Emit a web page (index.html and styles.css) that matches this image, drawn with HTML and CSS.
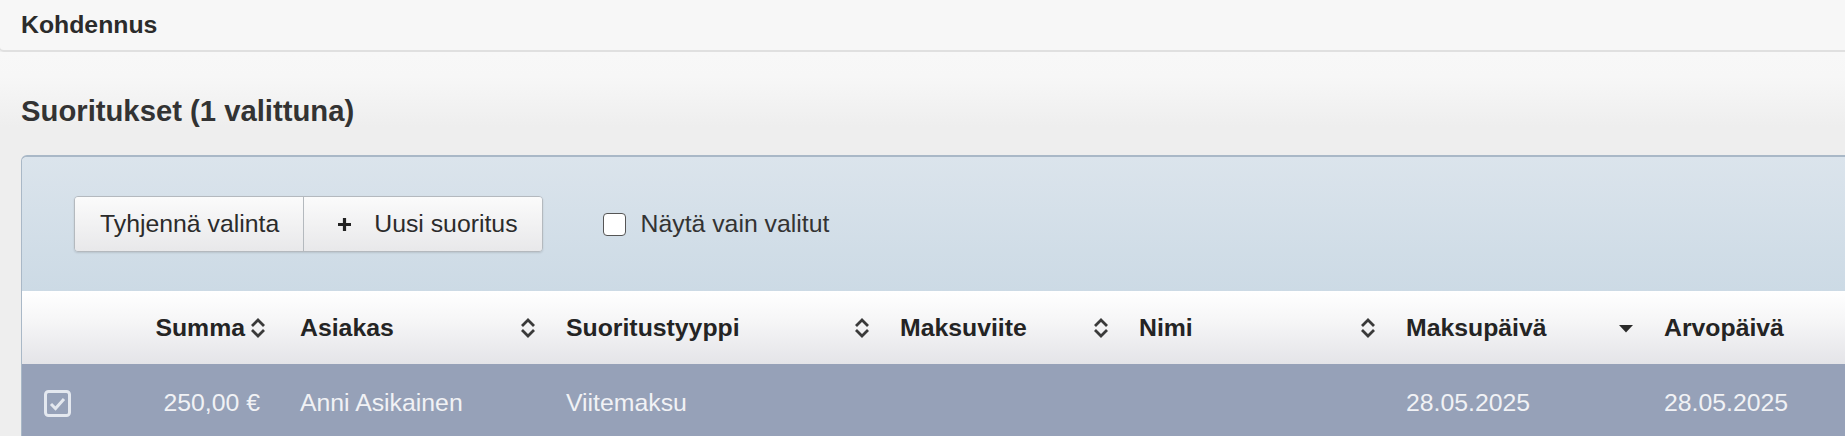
FILE: index.html
```html
<!DOCTYPE html>
<html lang="fi">
<head>
    <meta charset="UTF-8">
    <meta name="viewport" content="width=device-width, initial-scale=1.0">
    <title>Kohdennus</title>
    <link rel="stylesheet" href="styles.css">
</head>
<body>
    <div class="top-bar">Kohdennus</div>

    <div class="main">
        <h2 class="section-title">Suoritukset (1 valittuna)</h2>

        <div class="panel">
            <div class="toolbar">
                <div class="btn-group">
                    <button class="btn">Tyhjennä valinta</button>
                    <button class="btn btn-add">
                        <svg class="plus" width="15" height="15" viewBox="0 0 15 15">
                            <path d="M7.5 1v13M1 7.5h13" stroke="#222" stroke-width="3.2"/>
                        </svg>
                        Uusi suoritus
                    </button>
                </div>
                <label class="check-label">
                    <span class="check-box"></span>
                    Näytä vain valitut
                </label>
            </div>

            <div class="grid header">
                <div class="cell"></div>
                <div class="cell cell-right">Summa <svg class="sort" width="16" height="24" viewBox="0 0 16 24"><path d="M2 10l6-6 6 6M2 14l6 6 6-6" fill="none" stroke="#3a3a3a" stroke-width="2.8"/></svg></div>
                <div class="cell">Asiakas <svg class="sort" width="16" height="24" viewBox="0 0 16 24"><path d="M2 10l6-6 6 6M2 14l6 6 6-6" fill="none" stroke="#3a3a3a" stroke-width="2.8"/></svg></div>
                <div class="cell">Suoritustyyppi <svg class="sort" width="16" height="24" viewBox="0 0 16 24"><path d="M2 10l6-6 6 6M2 14l6 6 6-6" fill="none" stroke="#3a3a3a" stroke-width="2.8"/></svg></div>
                <div class="cell">Maksuviite <svg class="sort" width="16" height="24" viewBox="0 0 16 24"><path d="M2 10l6-6 6 6M2 14l6 6 6-6" fill="none" stroke="#3a3a3a" stroke-width="2.8"/></svg></div>
                <div class="cell">Nimi <svg class="sort" width="16" height="24" viewBox="0 0 16 24"><path d="M2 10l6-6 6 6M2 14l6 6 6-6" fill="none" stroke="#3a3a3a" stroke-width="2.8"/></svg></div>
                <div class="cell">Maksupäivä <svg class="sort" width="16" height="24" viewBox="0 0 16 24"><path d="M1 9h14l-7 7.5z" fill="#2a2a2a"/></svg></div>
                <div class="cell">Arvopäivä</div>
            </div>

            <div class="grid row selected">
                <div class="cell cell-check">
                    <svg width="27" height="27" viewBox="0 0 27 27">
                        <rect x="1.5" y="1.5" width="24" height="24" rx="3" fill="none" stroke="#e4e8ef" stroke-width="3"/>
                        <path d="M7 14l4.5 4.5L20 9" fill="none" stroke="#e4e8ef" stroke-width="3"/>
                    </svg>
                </div>
                <div class="cell cell-right">250,00 €</div>
                <div class="cell">Anni Asikainen</div>
                <div class="cell">Viitemaksu</div>
                <div class="cell"></div>
                <div class="cell"></div>
                <div class="cell">28.05.2025</div>
                <div class="cell">28.05.2025</div>
            </div>
        </div>
    </div>
</body>
</html>
```

FILE: styles.css
```css
body {
    margin: 0;
    font-family: "Liberation Sans", Arial, sans-serif;
    font-size: 24.8px;
    color: #333;
    background: #eeeeee;
    overflow: hidden;
}

.top-bar {
    height: 50px;
    padding-left: 21px;
    display: flex;
    align-items: center;
    font-weight: bold;
    color: #2b2b2b;
    background-color: #f7f7f7;
    border-bottom: 2px solid #e0e0e0;
    border-left: 1px solid #e0e0e0;
    border-bottom-left-radius: 5px;
    margin-left: -1px;
}

.main {
    padding: 0 0 0 21px;
    background: linear-gradient(#f8f8f8 0px, #f7f7f7 25px, #eeeeee 75px, #eeeeee 100%);
    min-height: 400px;
}

.section-title {
    margin: 0;
    padding: 42px 0 26px;
    font-size: 29.25px;
    line-height: 35px;
    color: #333;
}

.panel {
    margin-right: -20px;
    border: 1px solid #a9b8c7;
    border-top-width: 2px;
    border-top-left-radius: 6px;
    overflow: hidden;
}

.toolbar {
    height: 134px;
    padding-left: 52px;
    display: flex;
    align-items: center;
    background: linear-gradient(#dbe4ec, #ccdae5);
}

.btn-group {
    display: flex;
    border: 1px solid #b4b9be;
    border-radius: 4px;
    box-shadow: 0 1px 2px rgba(0, 0, 0, 0.12);
    overflow: hidden;
}

.btn {
    height: 54px;
    padding: 0 24px 0 25px;
    font-family: inherit;
    font-size: 24.8px;
    color: #2b2b2b;
    border: none;
    background: linear-gradient(#fbfbfb, #e8e8ea);
    display: flex;
    align-items: center;
}

.btn-add {
    border-left: 1px solid #b4b9be;
    padding-left: 33px;
    gap: 22px;
}

.check-label {
    margin-left: 60px;
    display: flex;
    align-items: center;
    gap: 15px;
    color: #333;
}

.check-box {
    width: 21px;
    height: 21px;
    border: 1.5px solid #555;
    border-radius: 4px;
    background: #fff;
}

.grid {
    display: grid;
    grid-template-columns: 82px 180px 266px 334px 239px 267px 258px 1fr;
}

.cell {
    display: flex;
    align-items: center;
    justify-content: space-between;
    padding: 0 14px 0 16px;
}

.header {
    height: 73px;
    font-weight: bold;
    color: #242424;
    background: linear-gradient(#ffffff 0%, #f6f6f7 40%, #e4e4e8 100%);
}

.header .cell-right {
    justify-content: flex-end;
    gap: 5px;
    padding-right: 18px;
}

.row {
    height: 78px;
}

.row.selected {
    background-color: #96a1b8;
    color: #f1f2f5;
}

.row .cell-right {
    justify-content: flex-end;
    padding-right: 24px;
}

.cell-check {
    padding-left: 22px;
}
```
